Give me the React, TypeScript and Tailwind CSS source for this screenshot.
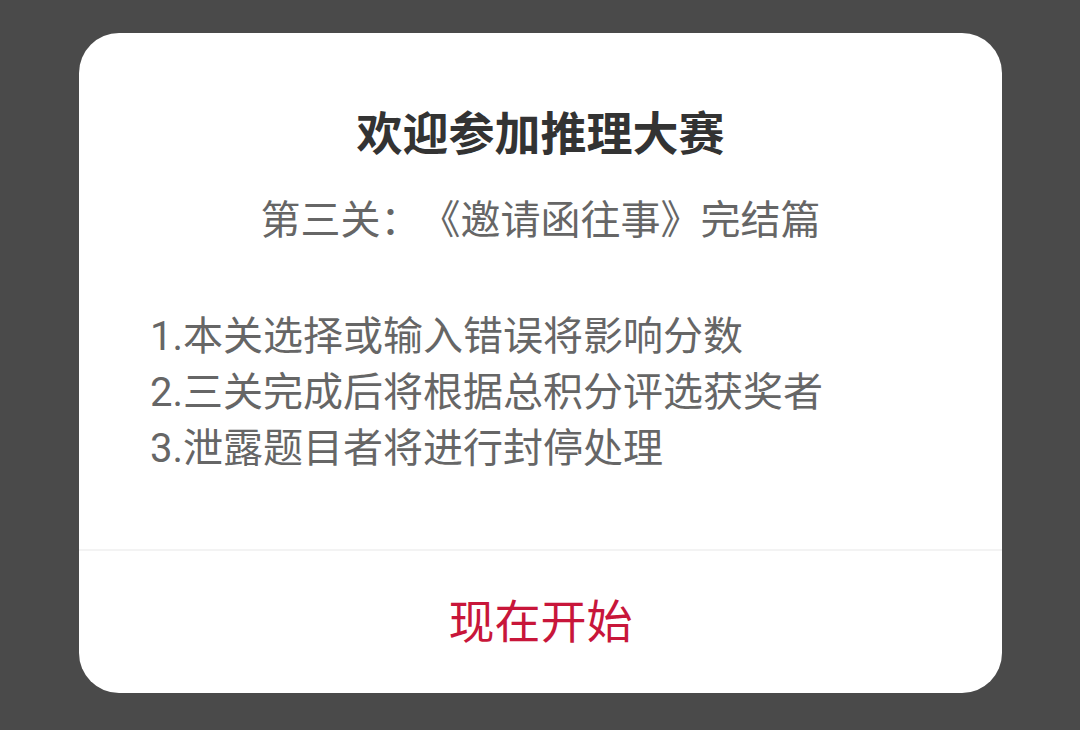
export default function App() {
  const rules = [
    '1.本关选择或输入错误将影响分数',
    '2.三关完成后将根据总积分评选获奖者',
    '3.泄露题目者将进行封停处理',
  ];

  return (
    <div
      className="w-[1080px] h-[730px] bg-[#4a4a4a] pt-[33px] pl-[79px]"
      style={{ fontFamily: '"Roboto", "Noto Sans CJK SC", sans-serif' }}
    >
      <div className="w-[923px] h-[660px] bg-white rounded-[40px] flex flex-col overflow-hidden">
        {/* Content */}
        <div className="flex-1 flex flex-col pt-[74px]">
          <h1 className="text-center text-[46px] leading-[55px] font-bold text-[#333333]">
            欢迎参加推理大赛
          </h1>
          <p className="mt-[31px] text-center text-[40px] leading-[56px] text-[#666666] [text-spacing-trim:space-all]">
            第三关：《邀请函往事》完结篇
          </p>
          <div className="mt-[60px] pl-[71px] flex flex-col">
            {rules.map(r => (
              <p key={r} className="text-[40px] leading-[56px] text-[#666666]">{r}</p>
            ))}
          </div>
        </div>

        {/* Action */}
        <button className="h-[144px] border-t-2 border-[#f3f3f3] flex items-center justify-center text-[46px] text-[#c8163a]">
          现在开始
        </button>
      </div>
    </div>
  );
}
